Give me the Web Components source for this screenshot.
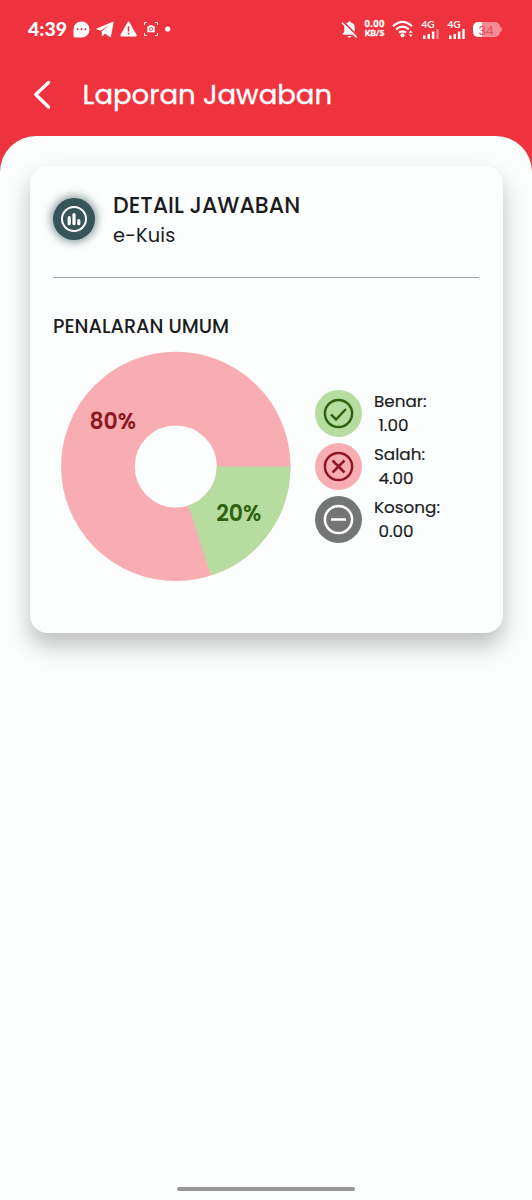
<!DOCTYPE html>
<html lang="id">
<head>
<meta charset="utf-8">
<title>Laporan Jawaban</title>
<style>
    body {
        margin: 0;
        background: #fbfdfc;
        color: #1b1c1e;
        font-family: Poppins, Inter, "Open Sans", sans-serif;
    }
</style>
</head>
<body>
<report-page>
    <status-bar slot="header" time="4:39"></status-bar>
    <app-bar slot="header">Laporan Jawaban</app-bar>
    <report-card>
        <span slot="title">DETAIL JAWABAN</span>
        <span slot="subtitle">e-Kuis</span>
        <span slot="section">PENALARAN UMUM</span>
        <donut-chart slot="chart" correct="20" wrong="80"></donut-chart>
        <legend-item type="correct" value="1.00">Benar:</legend-item>
        <legend-item type="wrong" value="4.00">Salah:</legend-item>
        <legend-item type="empty" value="0.00">Kosong:</legend-item>
    </report-card>
</report-page>

<script>
class ReportPage extends HTMLElement {
    constructor() {
        super();
        this.attachShadow({ mode: 'open' });
        this.shadowRoot.innerHTML = `
            <style>
                :host { display: flex; flex-direction: column; height: 1200px; background: #ee323e; }
                header { height: 136px; flex: none; }
                main {
                    flex: 1;
                    display: flex;
                    flex-direction: column;
                    justify-content: space-between;
                    box-sizing: border-box;
                    padding: 30px 29.5px 9px;
                    border-radius: 36px 36px 0 0;
                    background: #fbfdfc;
                    overflow: hidden;
                }
                .home { align-self: center; width: 178px; height: 4.5px; border-radius: 3px; background: #969796; }
            </style>
            <header><slot name="header"></slot></header>
            <main><slot></slot><div class="home"></div></main>
        `;
    }
}

class StatusBar extends HTMLElement {
    constructor() {
        super();
        this.attachShadow({ mode: 'open' });
        this.shadowRoot.innerHTML = `
            <style>
                :host {
                    display: flex;
                    align-items: center;
                    height: 58px;
                    box-sizing: border-box;
                    padding: 0 30px 0 28px;
                    color: #fff;
                }
                svg { display: block; flex: none; fill: #fff; }
                .time { width: 44.5px; font: 900 19.5px/24px Lato, sans-serif; white-space: nowrap; }
                .left, .right { display: flex; align-items: center; }
                .left { gap: 6px; }
                .right { margin-left: auto; }
                .speed {
                    width: 22px;
                    margin: 0 6px;
                    font: 900 8.2px/9px Lato, sans-serif;
                    -webkit-text-stroke: .4px #fff;
                    text-align: center;
                    white-space: nowrap;
                }
                .speed span { display: block; height: 9px; }
                .speed .num { font-size: 8.5px; letter-spacing: .9px; margin-right: -1px; }
                .signal { width: 18px; margin-left: 8px; }
                .signal span { display: block; font: 700 10px/9px Lato, sans-serif; }
                .battery {
                    width: 27px;
                    height: 15px;
                    margin-left: 7px;
                    border-radius: 5px;
                    background: linear-gradient(90deg, #fff 9px, #f88c93 9px);
                    color: #d9545d;
                    font: 400 13.5px/16px Roboto, sans-serif;
                    text-align: center;
                }
                .tip { width: 2px; height: 5px; margin-left: .5px; border-radius: 0 2px 2px 0; background: #f88c93; }
            </style>
            <div class="time"></div>
            <div class="left">
                <svg width="17" height="17" viewBox="0 0 17 17">
                    <path d="M8.5.5a8 8 0 0 1 0 16H2.2Q.5 16.500.5 14.800V8.500A8 8 0 0 1 8.500.5z"/>
                    <g fill="#d32e43"><circle cx="4.600" cy="8.300" r="1"/><circle cx="8.500" cy="8.300" r="1"/><circle cx="12.400" cy="8.300" r="1"/></g>
                </svg>
                <svg width="18" height="17" viewBox="0 0 18 17"><path d="M.7 7.600 16.300.9q1.600-.5 1.200 1.100L15 15.300q-.4 1.400-1.600.5L8.900 12.600 6.800 15q-.9.600-1-.6L5.600 10.600 12.900 4 4.800 9.400.8 8.400Q0 8 .7 7.600z"/></svg>
                <svg width="17" height="16" viewBox="0 0 17 16">
                    <path d="M7.700 1.100q.8-1 1.600 0l7.300 13q.4 1-.7 1.300H1.100Q0 15.100.4 14.100z"/>
                    <path d="M7.700 5.200h1.600v5.200H7.700zM7.700 11.800h1.600v1.700H7.700z" fill="#ee323e"/>
                </svg>
                <svg width="16" height="16" viewBox="0 0 16 16">
                    <path d="M1.500 4V1.500H4M12 1.500h2.500V4M14.500 12v2.500H12M4 14.500H1.500V12" fill="none" stroke="#fff" stroke-width="1"/>
                    <path d="M4.300 5.300h1.600l.7-1.100h2.800l.7 1.100h1.600v6H4.300z"/>
                    <circle cx="8" cy="8.200" r="1.700" fill="#fff" stroke="#ee323e" stroke-width=".8"/>
                </svg>
                <svg width="6" height="6" viewBox="0 0 6 6"><circle cx="2.700" cy="3" r="2.600"/></svg>
            </div>
            <div class="right">
                <svg width="17" height="19" viewBox="0 0 17 19">
                    <path d="M8.500 1.300q1.200 0 1.400 1.300 3.800 1.100 3.800 5.100v4l1.700 2.200v.8H1.600v-.8l1.700-2.200v-4q0-4 3.800-5.100.2-1.300 1.400-1.300zM6.600 16h3.800q-.5 1.800-1.900 1.800T6.600 16z"/>
                    <path d="M2.200 1.600 16.500 16" stroke="#ee323e" stroke-width="1.600"/>
                    <path d="M1 2.700 15.600 17.400" stroke="#fff" stroke-width="1.600"/>
                </svg>
                <div class="speed"><span class="num">0.00</span><span>KB/S</span></div>
                <svg width="22" height="18" viewBox="0 0 22 18">
                    <g fill="none" stroke="#fff" stroke-width="2.200">
                        <path d="M1 6.200Q10.500-2.300 20 6.200"/><path d="M4 9.500q6.500-5.600 13 0"/><path d="M7 12.700q3.500-2.700 7 0"/>
                    </g>
                    <circle cx="10.500" cy="15.300" r="2"/>
                    <path d="m18.700 10.200 2 2.600h-4zM18.700 17l2-2.600h-4z"/>
                </svg>
                <div class="signal"><span>4G</span>
                    <svg width="18" height="10" viewBox="0 0 18 10"><path d="M1 6.500h2.500V10H1zM5.500 5H8v5H5.500zM9.900 2.500h2.500V10H9.900z"/><path d="M14.300 0h2.400v10h-2.400z" opacity=".4"/></svg>
                </div>
                <div class="signal"><span>4G</span>
                    <svg width="18" height="10" viewBox="0 0 18 10"><path d="M1 6.500h2.500V10H1zM5.500 5H8v5H5.500zM9.900 2.500h2.500V10H9.900zM14.300 0h2.400v10h-2.400z"/></svg>
                </div>
                <div class="battery">34</div><div class="tip"></div>
            </div>
        `;
    }

    connectedCallback() {
        this.shadowRoot.querySelector('.time').textContent = this.getAttribute('time');
    }
}

class AppBar extends HTMLElement {
    constructor() {
        super();
        this.attachShadow({ mode: 'open' });
        this.shadowRoot.innerHTML = `
            <style>
                :host {
                    display: flex;
                    align-items: center;
                    gap: 31.5px;
                    height: 74px;
                    padding-left: 33px;
                    color: #fff;
                    font-size: 27.5px;
                    -webkit-text-stroke: .35px #fff;
                    white-space: nowrap;
                }
                svg { display: block; }
            </style>
            <svg width="18" height="30" viewBox="0 0 18 30" fill="none" stroke="#fff" stroke-width="3.300" stroke-linecap="round" stroke-linejoin="round"><path d="M15.500 2.500 2.800 14.500 15.500 27"/></svg>
            <slot></slot>
        `;
    }
}

class ReportCard extends HTMLElement {
    constructor() {
        super();
        this.attachShadow({ mode: 'open' });
        this.shadowRoot.innerHTML = `
            <style>
                :host {
                    display: block;
                    box-sizing: border-box;
                    height: 467px;
                    padding: 24px 23.5px;
                    border-radius: 18px;
                    background: #fcfefd;
                    box-shadow: 0 13px 22px rgba(0, 0, 0, .24);
                }
                .head { display: flex; gap: 18px; height: 61px; }
                .badge {
                    display: grid;
                    place-items: center;
                    width: 42px;
                    height: 42px;
                    margin-top: 7.5px;
                    border-radius: 50%;
                    background: #375558;
                    box-shadow: 0 0 9px 2px #37555899;
                }
                .title, .subtitle { line-height: 30px; white-space: nowrap; }
                .title { padding-top: 1px; font-size: 22.1px; font-weight: 500; }
                .subtitle { font-size: 19.4px; letter-spacing: .15px; }
                hr { height: 1px; margin: 26px 0 34px; border: 0; background: #a1a3a2; }
                .section { padding-top: 1px; font-size: 19.3px; line-height: 28px; font-weight: 500; white-space: nowrap; }
                .body { display: flex; align-items: center; gap: 24px; padding: 10.5px 0 0 8px; }
                .legend { display: grid; gap: 6px; margin-top: -1px; }
            </style>
            <div class="head">
                <div class="badge">
                    <svg width="28" height="28" viewBox="0 0 28 28" fill="none" stroke="#fff" stroke-linecap="round">
                        <circle cx="14" cy="14" r="12" stroke-width="2"/>
                        <path d="M9.200 12.500v6.200M14 9.500v9.200M18.800 15.700v3" stroke-width="3.200"/>
                    </svg>
                </div>
                <div>
                    <div class="title"><slot name="title"></slot></div>
                    <div class="subtitle"><slot name="subtitle"></slot></div>
                </div>
            </div>
            <hr>
            <div class="section"><slot name="section"></slot></div>
            <div class="body">
                <slot name="chart"></slot>
                <div class="legend"><slot></slot></div>
            </div>
        `;
    }
}

class DonutChart extends HTMLElement {
    constructor() {
        super();
        this.attachShadow({ mode: 'open' });
    }

    connectedCallback() {
        const correct = Number(this.getAttribute('correct'));
        const wrong = Number(this.getAttribute('wrong'));
        const radius = 77.85;
        const length = 2 * Math.PI * radius;
        const slice = length * correct / 100;

        // the correct slice starts at 3 o'clock and runs clockwise
        this.shadowRoot.innerHTML = `
            <style>
                :host { display: block; width: 230px; height: 230px; }
                svg { display: block; overflow: visible; }
                circle { fill: none; stroke-width: 73.7px; }
                text { font-size: 22px; font-weight: 600; text-anchor: middle; }
            </style>
            <svg width="230" height="230" viewBox="0 0 230 230">
                <circle cx="114.800" cy="114.400" r="${radius}" stroke="#f8adb2"/>
                <circle cx="114.800" cy="114.400" r="${radius}" stroke="#b6dc9f" stroke-dasharray="${slice} ${length}"/>
                <text x="51.700" y="77.300" fill="#8d1823">${wrong}%</text>
                <text x="177.700" y="169.300" fill="#2e620f">${correct}%</text>
            </svg>
        `;
    }
}

const LEGEND = {
    correct: { bg: '#b6dc9f', fg: '#2e620f', path: 'M16 24.500 21 29.500 31 19' },
    wrong: { bg: '#f8adb2', fg: '#8d1823', path: 'M17.500 17.500l12 12M29.500 17.500l-12 12' },
    empty: { bg: '#747675', fg: '#fff', path: 'M16 23.500h15' }
};

class LegendItem extends HTMLElement {
    constructor() {
        super();
        this.attachShadow({ mode: 'open' });
    }

    connectedCallback() {
        const { bg, fg, path } = LEGEND[this.getAttribute('type')];
        this.shadowRoot.innerHTML = `
            <style>
                :host { display: flex; align-items: center; gap: 12px; height: 47px; font-size: 16.800px; line-height: 23.600px; white-space: nowrap; }
                svg { display: block; flex: none; }
                .text { padding-top: 2px; -webkit-text-stroke: .2px; }
                .value { padding-left: 4.5px; }
            </style>
            <svg width="47" height="47" viewBox="0 0 47 47" fill="none" stroke="${fg}" stroke-width="2.500">
                <circle cx="23.500" cy="23.500" r="23.500" fill="${bg}" stroke="none"/>
                <circle cx="23.500" cy="23.500" r="13.600"/>
                <path d="${path}"/>
            </svg>
            <div class="text">
                <div><slot></slot></div>
                <div class="value">${this.getAttribute('value')}</div>
            </div>
        `;
    }
}

customElements.define('report-page', ReportPage);
customElements.define('status-bar', StatusBar);
customElements.define('app-bar', AppBar);
customElements.define('report-card', ReportCard);
customElements.define('donut-chart', DonutChart);
customElements.define('legend-item', LegendItem);
</script>
</body>
</html>
